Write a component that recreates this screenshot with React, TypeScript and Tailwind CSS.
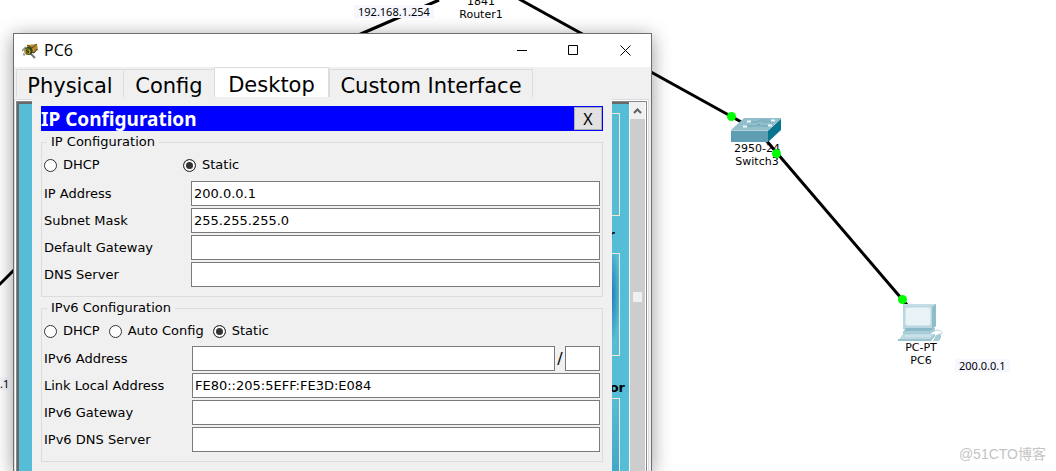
import React from "react";

interface INodeLabel {
  lines: string[];
  place: string;
}

interface ITab {
  title: string;
  width: string;
}

interface IField {
  id: string;
  label: string;
  value: string;
}

const nodeLabels: INodeLabel[] = [
  { lines: ["1841", "Router1"], place: "left-[451px] -top-[5px]" },
  { lines: ["2950-24", "Switch3"], place: "left-[727px] top-[142px]" },
  { lines: ["PC-PT", "PC6"], place: "left-[891px] top-[341px]" },
];

const tabs: ITab[] = [
  { title: "Physical", width: "w-[107px]" },
  { title: "Config", width: "w-[91px]" },
  { title: "Desktop", width: "w-[115px]" },
  { title: "Custom Interface", width: "w-[204px]" },
];

const ipv4Fields: IField[] = [
  { id: "ip", label: "IP Address", value: "200.0.0.1" },
  { id: "mask", label: "Subnet Mask", value: "255.255.255.0" },
  { id: "gateway", label: "Default Gateway", value: "" },
  { id: "dns", label: "DNS Server", value: "" },
];

const ipv6Fields: IField[] = [
  { id: "link-local", label: "Link Local Address", value: "FE80::205:5EFF:FE3D:E084" },
  { id: "gateway6", label: "IPv6 Gateway", value: "" },
  { id: "dns6", label: "IPv6 DNS Server", value: "" },
];

const inputClass = "h-[25px] min-w-0 border border-[#7a7a7a] bg-white px-[2px] outline-none";

const Topology: React.FC = () => {
  return (
    <>
      <svg className="absolute left-0 top-0" width="1056" height="471" viewBox="0 0 1056 471" aria-hidden="true">
        <g stroke="#000" strokeWidth="3">
          <path d="M439 0L340 43M519 -1L754 129M765 139L907 305M-2 286L20 264" />
        </g>
        {/* switch */}
        <path d="M731 130L744 118H781L768 130Z" fill="#93bfcc" />
        <path d="M731 130H768V142H731Z" fill="#5e9db2" />
        <path d="M768 130L781 118V130L768 142Z" fill="#08758f" />
        <path d="M731 130.500H768L781 118.500" fill="none" stroke="#b5d3dc" />
        <path d="M749 122H757L761 120H770M745 126H755L760 124M758 126H770M761 122H774" fill="none" stroke="#6fa5b5" />
        <path d="M747 121.500h4M771 120.500h4M743 126.500h4M768 125.500h4" stroke="#eef7fa" strokeWidth="2" />
        {/* pc */}
        <path d="M903 304H936V326L931 329H903Z" fill="#a9cdd8" />
        <path d="M903 304H936L932 307H906Z" fill="#c5dde5" />
        <path d="M932 307L936 304V326L932 329Z" fill="#8fbdcb" />
        <path d="M903 306H932V328H903Z" fill="#b9d7e0" />
        <rect x="905.500" y="307.500" width="25" height="18" rx="2" fill="#e9f2f6" stroke="#d2e5ec" />
        <path d="M906 328H935L931 332H903Z" fill="#8ab9c8" />
        <path d="M903 331H930L935 328V331L930 334H903Z" fill="#a9cdd8" />
        <path d="M903 334H935L930 341H898Z" fill="#bcd9e2" />
        <path d="M898 339H930L935 334V336L931 341H898Z" fill="#98c3d0" />
        <path d="M905 336H930" stroke="#dceaf0" />
        <path d="M934 331C938 329 943 331 942 333C941 335 937 333 937 337" fill="none" stroke="#b4cfd8" />
        <path d="M936 335L941 334V338L939 341H933Z" fill="#a5cbd7" />
        <g fill="#0f0">
          <circle cx="731.500" cy="116.500" r="4.500" />
          <circle cx="902.500" cy="299.500" r="4.500" />
        </g>
      </svg>
      {nodeLabels.map((node) => (
        <div key={node.lines[0]} className={`absolute w-[60px] text-center text-[11px] leading-[13px] ${node.place}`}>
          {node.lines.map((line) => (
            <p key={line}>{line}</p>
          ))}
        </div>
      ))}
      <span className="absolute left-[772px] top-[149px] size-[9px] rounded-full bg-[#00ff00]" />
      <p className="absolute left-[354px] top-[5px] bg-[#f7f7ff] px-[4px] font-['Noto_Sans'] text-[11px] leading-[13px]">192.168.1.254</p>
      <p className="absolute left-[955px] top-[359px] bg-[#f7f7ff] px-[4px] font-['Noto_Sans'] text-[11px] leading-[13px]">200.0.0.1</p>
      <p className="absolute left-0 top-[377px] bg-[#f7f7ff] font-['Noto_Sans'] text-[11px] leading-[13px]">.1</p>
    </>
  );
};

const TitleBar: React.FC = () => {
  return (
    <header className="flex h-[33px] shrink-0 items-center bg-white pl-2">
      <svg width="16" height="16" viewBox="0 0 16 16" aria-hidden="true">
        <path d="M5 2L15 1L16 7L11 10L5 8Z" fill="#b58a35" />
        <path d="M5 2L10 5L15 1" fill="none" stroke="#5f4717" />
        <path d="M7 8L12 10L15 6" fill="none" stroke="#3d321a" />
        <path d="M8 10L13 15" stroke="#777" strokeWidth="2" />
        <path d="M0 8L4 4M1 11L3 12" stroke="#9aa3a3" strokeWidth="2" />
        <circle cx="6.500" cy="8" r="4" fill="#26461f" />
        <circle cx="5.500" cy="8.500" r="3" fill="#b89a22" />
        <path d="M7 7H4.500V8.500H6.500V10H4" fill="none" stroke="#3b3510" />
      </svg>
      <h1 className="ml-1.5 flex-1 pb-[2px] font-['Open_Sans'] text-[16px] leading-5">PC6</h1>
      <button aria-label="Minimize" className="flex h-full w-[51px] items-center justify-center">
        <svg width="11" height="11" viewBox="0 0 11 11">
          <path d="M0 5.500H10" stroke="#000" />
        </svg>
      </button>
      <button aria-label="Maximize" className="flex h-full w-[51px] items-center justify-center">
        <svg width="11" height="11" viewBox="0 0 11 11">
          <path d="M.5 .5H9.500V9.500H.5Z" fill="none" stroke="#000" />
        </svg>
      </button>
      <button aria-label="Close" className="flex h-full w-[52px] items-center justify-center">
        <svg width="11" height="11" viewBox="0 0 11 11">
          <path d="M.5 .5L10.500 10.500M10.500 .5L.5 10.500" stroke="#000" />
        </svg>
      </button>
    </header>
  );
};

const Radio: React.FC<{ name: string; label: string; checked?: boolean }> = ({ name, label, checked }) => {
  return (
    <label className="flex items-center gap-1.5">
      <input
        type="radio"
        name={name}
        defaultChecked={checked}
        className="size-[13px] appearance-none rounded-full border border-[#333] bg-white checked:bg-[#333] checked:shadow-[inset_0_0_0_2px_#fff]"
      />
      {label}
    </label>
  );
};

const Field: React.FC<{ field: IField; labelWidth: string }> = ({ field, labelWidth }) => {
  return (
    <div className="flex items-center">
      <label htmlFor={field.id} className={`shrink-0 ${labelWidth}`}>
        {field.label}
      </label>
      <input id={field.id} type="text" defaultValue={field.value} className={`flex-1 ${inputClass}`} />
    </div>
  );
};

const IpConfiguration: React.FC = () => {
  return (
    <section className="flex-1 px-[9px] pt-[9px] text-[13px] leading-4">
      <div className="flex h-[25px] items-center justify-between bg-[#0000ff] pr-px">
        <h2 className="font-['Noto_Sans'] text-[19px] font-bold leading-6 text-white">IP Configuration</h2>
        <button className="h-[23px] w-7 border border-[#adadad] bg-[#e1e1e1] font-['Noto_Sans'] text-[16px] leading-5">X</button>
      </div>

      <fieldset className="border border-[#dcdcdc] px-[2px] pb-[9px]">
        <legend className="ml-[3px] px-1 leading-[22px]">IP Configuration</legend>
        <div className="flex h-7 items-start pt-1">
          <div className="w-[139px]">
            <Radio name="ipv4" label="DHCP" />
          </div>
          <Radio name="ipv4" label="Static" checked />
        </div>
        <div className="flex flex-col gap-[2px]">
          {ipv4Fields.map((field) => (
            <Field key={field.id} field={field} labelWidth="w-[147px]" />
          ))}
        </div>
      </fieldset>

      <fieldset className="border border-[#dcdcdc] px-[2px] pb-[9px]">
        <legend className="ml-[3px] px-1 leading-[22px]">IPv6 Configuration</legend>
        <div className="flex h-[27px] items-start gap-[9px] pt-1">
          <Radio name="ipv6" label="DHCP" />
          <Radio name="ipv6" label="Auto Config" />
          <Radio name="ipv6" label="Static" checked />
        </div>
        <div className="flex flex-col gap-[2px]">
          <div className="flex items-center">
            <label htmlFor="ipv6" className="w-[148px] shrink-0">
              IPv6 Address
            </label>
            <input id="ipv6" type="text" className={`flex-1 ${inputClass}`} />
            <span className="w-2.5 text-center text-[16px]">/</span>
            <input type="text" aria-label="Prefix length" className={`w-[35px] ${inputClass}`} />
          </div>
          {ipv6Fields.map((field) => (
            <Field key={field.id} field={field} labelWidth="w-[148px]" />
          ))}
        </div>
      </fieldset>
    </section>
  );
};

// right edge of the desktop icons, the rest is under the dialog
const DesktopEdge: React.FC = () => {
  return (
    <div className="flex w-[17px] flex-col overflow-hidden border-t-2 border-[#696969] bg-[#55bdd5] pt-[9px] text-[13px] font-bold leading-4">
      <div className="h-[103px] w-2 shrink-0 border-y border-r border-[#f0e9d5]" />
      <div className="flex h-[37px] w-[3px] shrink-0 items-center justify-end overflow-hidden">r</div>
      <div className="h-[103px] w-2 shrink-0 border-y border-r border-[#f0e9d5] bg-[radial-gradient(ellipse_8px_48px_at_0_40%,#1f7fb8,#55bdd5)]" />
      <div className="flex h-[42px] w-[13px] shrink-0 items-end justify-end pb-[2px]">or</div>
      <div className="h-[103px] w-2 shrink-0 border-y border-r border-[#f0e9d5] bg-linear-to-b from-[#55bdd5] to-[#3a9fc4]" />
    </div>
  );
};

const ScrollBar: React.FC = () => {
  return (
    <div className="flex w-[15px] flex-col bg-[#cdcdcd]">
      <button aria-label="Scroll up" className="flex h-[17px] items-center justify-center bg-[#f0f0f0]">
        <svg width="9" height="6" viewBox="0 0 9 6">
          <path d="M1 5L4.500 1.500L8 5" fill="none" stroke="#606060" strokeWidth="2" />
        </svg>
      </button>
      <span className="mt-[173px] h-2.5 w-[9px] self-center bg-[#f0f0f0]" />
    </div>
  );
};

const DeviceWindow: React.FC = () => {
  return (
    <main className="absolute -bottom-px left-[13px] top-[33px] flex w-[639px] flex-col overflow-hidden border border-[#6e6e6e] bg-[#f0f0f0] shadow-[0_3px_18px_rgba(0,0,0,0.4)]">
      <TitleBar />
      <nav className="flex h-[30px] shrink-0 items-end pl-[2px] text-[21px] leading-6">
        {tabs.map((tab) => (
          <button
            key={tab.title}
            className={`shrink-0 whitespace-nowrap border-l border-t border-[#dcdcdc] pt-1 last:border-r ${tab.width} ${
              tab.title === "Desktop" ? "h-full border-r bg-white" : "h-7"
            }`}
          >
            {tab.title}
          </button>
        ))}
      </nav>
      <div className="flex min-h-0 flex-1 pr-[2px]">
        <div className="mt-[2px] flex w-[18px] border-l border-t border-[#dcdcdc] bg-white pl-px pt-px">
          <div className="flex flex-1 border-l border-t border-[#828790]">
            <div className="flex-1 border-l-2 border-t-2 border-[#696969] bg-[#55bdd5]" />
          </div>
        </div>
        <IpConfiguration />
        <div className="mt-[2px] flex w-[37px] border-r border-t border-[#dcdcdc] bg-white pr-px pt-px">
          <div className="flex flex-1 justify-between border-r border-t border-[#828790] pr-px">
            <DesktopEdge />
            <ScrollBar />
          </div>
        </div>
      </div>
    </main>
  );
};

const App: React.FC = () => {
  return (
    <div className="relative h-screen overflow-hidden bg-white font-['DejaVu_Sans',sans-serif] text-black">
      <Topology />
      <DeviceWindow />
      <p className="absolute bottom-2 right-2.5 font-['Liberation_Sans','Noto_Sans_CJK_SC',sans-serif] text-[14px] leading-[18px] text-[#c4c4c4]">
        @51CTO博客
      </p>
    </div>
  );
};

export default App;
